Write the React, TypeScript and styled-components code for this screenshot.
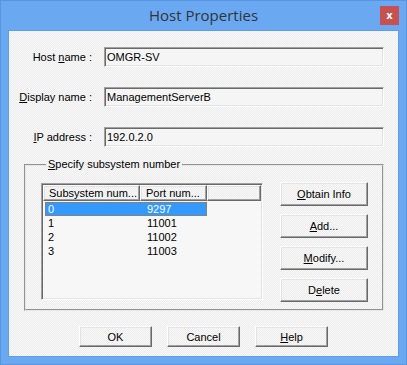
import React, { FC } from 'react'
import styled, { createGlobalStyle, css } from 'styled-components'

const GlobalStyle = createGlobalStyle`
  html, body {
    margin: 0;
    padding: 0;
    background: #6aa9f1;
  }
  * {
    box-sizing: border-box;
  }
`

const dither = css`
  background: repeating-conic-gradient(#ececec 0 25%, #f9f9f9 0 50%) 0 0 / 2px 2px;
`

const sunken = css`
  border-top: 1px solid #a0a0a0;
  border-left: 1px solid #a0a0a0;
  border-bottom: 1px solid #ffffff;
  border-right: 1px solid #ffffff;
  box-shadow: inset 1px 1px 0 #696969, inset -1px -1px 0 #e3e3e3;
`

const raised = css`
  border-top: 1px solid #ffffff;
  border-left: 1px solid #ffffff;
  border-bottom: 1px solid #696969;
  border-right: 1px solid #696969;
  box-shadow: inset -1px -1px 0 #a0a0a0, inset 1px 1px 0 #e3e3e3;
`

const uiFont = css`
  font-family: 'Liberation Sans', Arial, sans-serif;
  font-size: 11px;
  color: #000;
`

interface Subsystem {
  id: string
  port: string
}

const subsystems: Subsystem[] = [
  { id: '0', port: '9297' },
  { id: '1', port: '11001' },
  { id: '2', port: '11002' },
  { id: '3', port: '11003' },
]

const App: FC = () => {
  return (
    <>
      <GlobalStyle />
      <Window>
        <TitleBar>
          <Title>Host Properties</Title>
          <CloseButton>x</CloseButton>
        </TitleBar>
        <Client>
          <Form>
            <Label>
              Host <u>n</u>ame :
            </Label>
            <TextBox>OMGR-SV</TextBox>
            <Label>
              <u>D</u>isplay name :
            </Label>
            <TextBox>ManagementServerB</TextBox>
            <Label>
              <u>I</u>P address :
            </Label>
            <TextBox>192.0.2.0</TextBox>
          </Form>

          <GroupBox>
            <Legend>
              <u>S</u>pecify subsystem number
            </Legend>
            <GroupContent>
              <ListView>
                <HeaderRow>
                  <HeaderCell width={97}>Subsystem num...</HeaderCell>
                  <HeaderCell width={67}>Port num...</HeaderCell>
                  <HeaderFiller />
                </HeaderRow>
                {subsystems.map((s, i) => (
                  <ListRow key={s.id} selected={i === 0}>
                    <ListCell pad={3}>{s.id}</ListCell>
                    <ListCell pad={7}>{s.port}</ListCell>
                  </ListRow>
                ))}
              </ListView>
              <SideButtons>
                <SideButton>
                  <span>
                    <u>O</u>btain Info
                  </span>
                </SideButton>
                <SideButton>
                  <span>
                    <u>A</u>dd...
                  </span>
                </SideButton>
                <SideButton>
                  <span>
                    <u>M</u>odify...
                  </span>
                </SideButton>
                <SideButton>
                  <span>
                    D<u>e</u>lete
                  </span>
                </SideButton>
              </SideButtons>
            </GroupContent>
          </GroupBox>

          <DialogButtons>
            <DialogButton>OK</DialogButton>
            <DialogButton>Cancel</DialogButton>
            <DialogButton>
              <span>
                <u>H</u>elp
              </span>
            </DialogButton>
          </DialogButtons>
        </Client>
      </Window>
    </>
  )
}

export default App

const Window = styled.div`
  width: 407px;
  height: 365px;
  background: #6aa9f1;
  border: 1px solid #5a96df;
  display: flex;
  flex-direction: column;
  padding: 0 7px 7px;
`

const TitleBar = styled.div`
  height: 29px;
  display: flex;
  align-items: center;
  justify-content: center;
  position: relative;
`

const Title = styled.div`
  font-family: 'Open Sans', 'Noto Sans', sans-serif;
  font-size: 15px;
  color: #333333;
  margin-top: -2px;
`

const CloseButton = styled.div`
  position: absolute;
  right: 0;
  top: 5px;
  width: 19px;
  height: 19px;
  background: #c75050;
  color: #fff;
  font-family: 'DejaVu Sans', sans-serif;
  font-weight: bold;
  font-size: 10px;
  display: flex;
  align-items: center;
  justify-content: center;
  line-height: 1;
`

const Client = styled.div`
  ${dither};
  ${uiFont};
  flex: 1;
  border: 1px solid #5f9de6;
  display: flex;
  flex-direction: column;
`

const Form = styled.div`
  display: grid;
  grid-template-columns: 83px 280px;
  grid-auto-rows: 20px;
  column-gap: 12px;
  row-gap: 20px;
  margin-top: 16px;
`

const Label = styled.div`
  text-align: right;
  line-height: 20px;
  white-space: nowrap;
`

const TextBox = styled.div`
  ${sunken};
  background: #f5f5f5;
  display: flex;
  align-items: center;
  padding: 0 2px;
`

const GroupBox = styled.fieldset`
  margin: 11px 0 0 15px;
  width: 360px;
  padding: 11px 14px 7px 15px;
  border: 2px groove #e6e6e6;
`

const Legend = styled.legend`
  padding: 0 2px;
  margin-left: 5px;
  line-height: 13px;
`

const GroupContent = styled.div`
  display: flex;
  align-items: flex-start;
  gap: 17px;
`

const ListView = styled.div`
  ${sunken};
  width: 222px;
  height: 117px;
  background: #f7f7f7;
  padding: 1px;
  margin-top: 1px;
`

const HeaderRow = styled.div`
  display: flex;
  height: 16px;
  margin-bottom: 1px;
`

const HeaderCell = styled.div<{ width: number }>`
  ${dither};
  ${raised};
  width: ${(p) => p.width}px;
  padding-left: 5px;
  display: flex;
  align-items: center;
  white-space: nowrap;
  overflow: hidden;
`

const HeaderFiller = styled.div`
  ${dither};
  ${raised};
  flex: 1;
`

const ListRow = styled.div<{ selected?: boolean }>`
  display: grid;
  grid-template-columns: 95px 67px;
  width: 162px;
  height: 14px;
  margin-left: 2px;
  align-items: center;
  background: ${(p) => (p.selected ? '#3399ff' : 'transparent')};
  color: ${(p) => (p.selected ? '#ffffff' : '#000000')};
  outline: ${(p) => (p.selected ? '1px dotted #d07000' : 'none')};
  outline-offset: -1px;
`

const ListCell = styled.div<{ pad: number }>`
  padding-left: ${(p) => p.pad}px;
`

const SideButtons = styled.div`
  display: flex;
  flex-direction: column;
  gap: 8px;
`

const buttonBase = css`
  ${dither};
  ${raised};
  ${uiFont};
  display: flex;
  align-items: center;
  justify-content: center;
`

const SideButton = styled.div`
  ${buttonBase};
  width: 88px;
  height: 24px;
`

const DialogButtons = styled.div`
  display: flex;
  justify-content: center;
  gap: 15px;
  margin-top: 15px;
`

const DialogButton = styled.div`
  ${buttonBase};
  width: 73px;
  height: 21px;
`
